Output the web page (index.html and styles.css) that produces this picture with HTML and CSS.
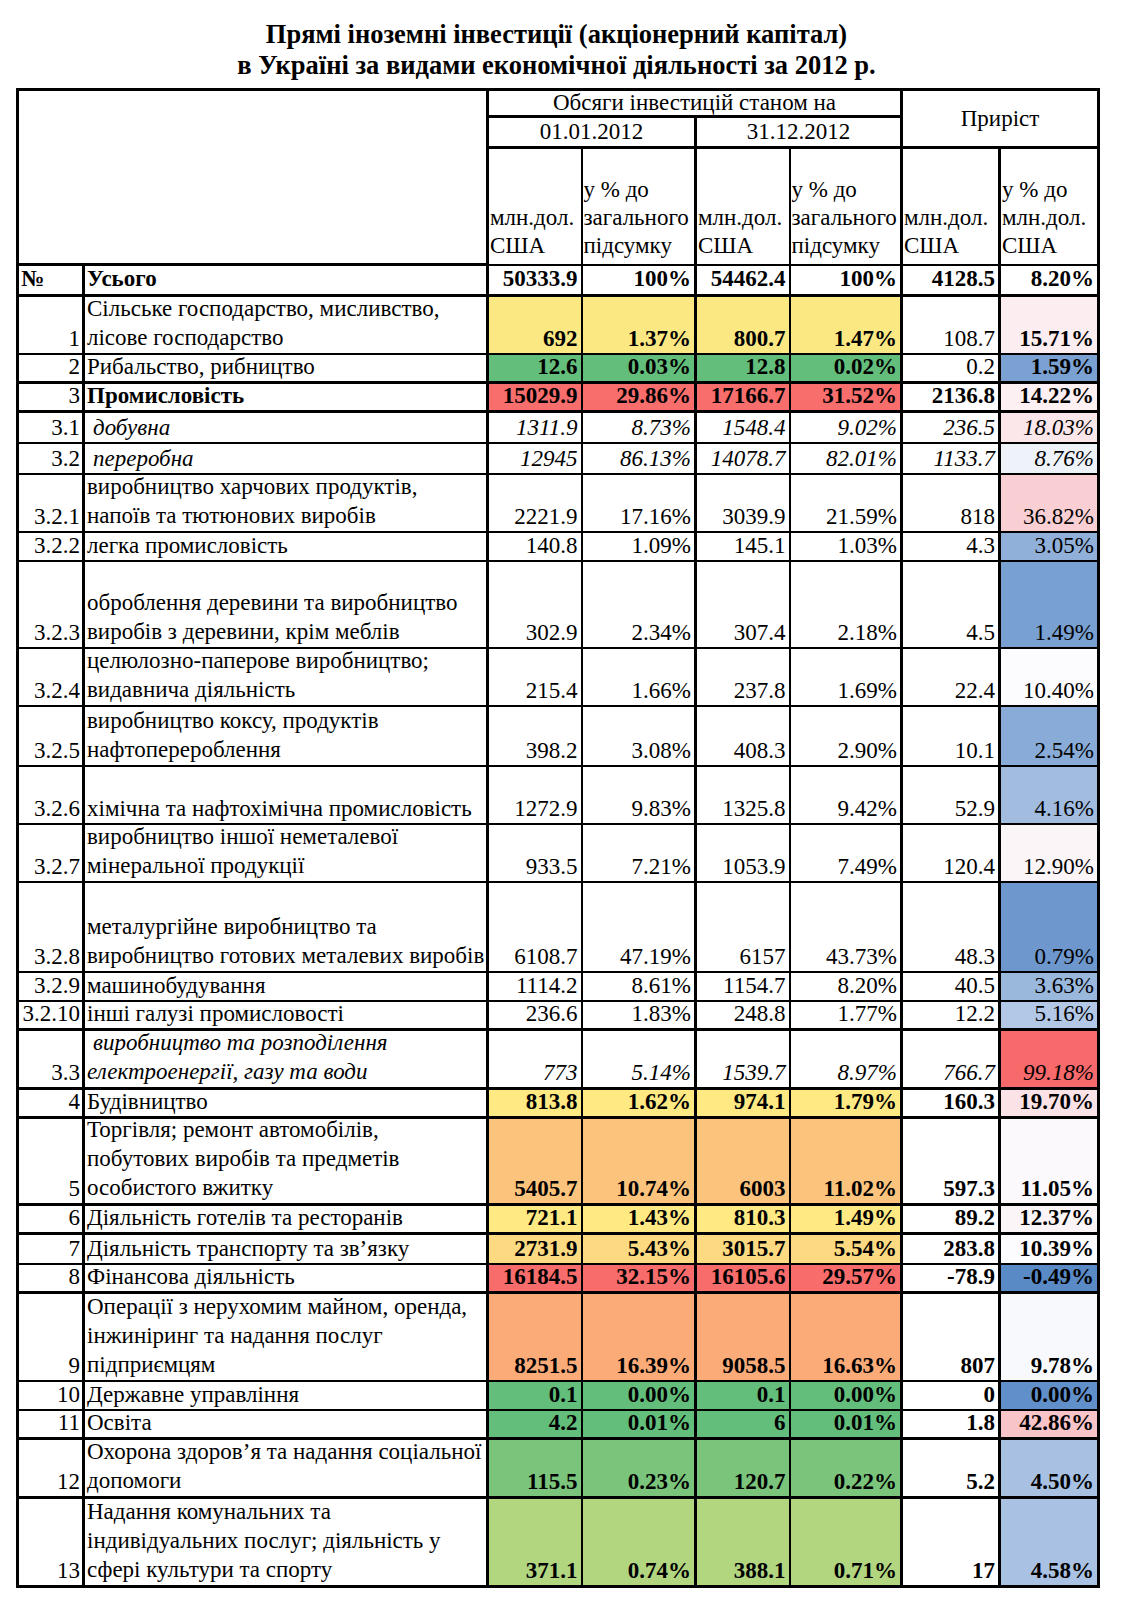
FILE: index.html
```html
<!DOCTYPE html>
<html lang="uk">
<head>
<meta charset="utf-8">
<title>Прямі іноземні інвестиції</title>
<link rel="stylesheet" href="styles.css">
</head>
<body>
<div class="page">
  <h1 class="title">Прямі іноземні інвестиції (акціонерний капітал)<br>в Україні за видами економічної діяльності за 2012 р.</h1>
  <table class="fdi">
    <colgroup>
      <col class="w-no"><col class="w-name"><col class="w-a"><col class="w-b"><col class="w-a"><col class="w-c"><col class="w-d"><col class="w-e">
    </colgroup>
    <thead>
      <tr class="hA">
        <th colspan="2" rowspan="3" class="blank"></th>
        <th colspan="4" class="ctr">Обсяги інвестицій станом на</th>
        <th colspan="2" rowspan="2" class="ctr">Приріст</th>
      </tr>
      <tr class="hB">
        <th colspan="2" class="ctr">01.01.2012</th>
        <th colspan="2" class="ctr">31.12.2012</th>
      </tr>
      <tr class="hC">
        <th class="sub">млн.дол.<br>США</th>
        <th class="sub">у % до<br>загального<br>підсумку</th>
        <th class="sub">млн.дол.<br>США</th>
        <th class="sub">у % до<br>загального<br>підсумку</th>
        <th class="sub">млн.дол.<br>США</th>
        <th class="sub">у % до<br>млн.дол.<br>США</th>
      </tr>
    </thead>
    <tbody>
      <tr class="h1b total tb">
        <td class="nol">№</td><td>Усього</td>
        <td>50333.9</td><td>100%</td><td>54462.4</td><td>100%</td><td>4128.5</td><td>8.20%</td>
      </tr>
      <tr class="h2 f1">
        <td>1</td><td><span class="ml">Сільське господарство, мисливство,<br>лісове господарство</span></td>
        <td>692</td><td>1.37%</td><td>800.7</td><td>1.47%</td><td class="reg">108.7</td><td class="s-p15">15.71%</td>
      </tr>
      <tr class="h1 f2 tb">
        <td>2</td><td>Рибальство, рибництво</td>
        <td>12.6</td><td>0.03%</td><td>12.8</td><td>0.02%</td><td class="reg">0.2</td><td class="s-b159">1.59%</td>
      </tr>
      <tr class="h1 f3 tb bold-all">
        <td>3</td><td>Промисловість</td>
        <td>15029.9</td><td>29.86%</td><td>17166.7</td><td>31.52%</td><td>2136.8</td><td class="s-p14">14.22%</td>
      </tr>
      <tr class="h1b it">
        <td>3.1</td><td class="ind">добувна</td>
        <td>1311.9</td><td>8.73%</td><td>1548.4</td><td>9.02%</td><td>236.5</td><td class="s-p18">18.03%</td>
      </tr>
      <tr class="h1b it">
        <td>3.2</td><td class="ind">переробна</td>
        <td>12945</td><td>86.13%</td><td>14078.7</td><td>82.01%</td><td>1133.7</td><td class="s-b876">8.76%</td>
      </tr>
      <tr class="h2 plain">
        <td>3.2.1</td><td><span class="ml">виробництво харчових продуктів,<br>напоїв та тютюнових виробів</span></td>
        <td>2221.9</td><td>17.16%</td><td>3039.9</td><td>21.59%</td><td>818</td><td class="s-p36">36.82%</td>
      </tr>
      <tr class="h1 plain">
        <td>3.2.2</td><td>легка промисловість</td>
        <td>140.8</td><td>1.09%</td><td>145.1</td><td>1.03%</td><td>4.3</td><td class="s-b305">3.05%</td>
      </tr>
      <tr class="h3 plain">
        <td>3.2.3</td><td><span class="ml">оброблення деревини та виробництво<br>виробів з деревини, крім меблів</span></td>
        <td>302.9</td><td>2.34%</td><td>307.4</td><td>2.18%</td><td>4.5</td><td class="s-b149">1.49%</td>
      </tr>
      <tr class="h2 plain">
        <td>3.2.4</td><td><span class="ml">целюлозно-паперове виробництво;<br>видавнича діяльність</span></td>
        <td>215.4</td><td>1.66%</td><td>237.8</td><td>1.69%</td><td>22.4</td><td class="s-w">10.40%</td>
      </tr>
      <tr class="h2b plain">
        <td>3.2.5</td><td><span class="ml">виробництво коксу, продуктів<br>нафтоперероблення</span></td>
        <td>398.2</td><td>3.08%</td><td>408.3</td><td>2.90%</td><td>10.1</td><td class="s-b254">2.54%</td>
      </tr>
      <tr class="h2 plain">
        <td>3.2.6</td><td>хімічна та нафтохімічна промисловість</td>
        <td>1272.9</td><td>9.83%</td><td>1325.8</td><td>9.42%</td><td>52.9</td><td class="s-b416">4.16%</td>
      </tr>
      <tr class="h2 plain">
        <td>3.2.7</td><td><span class="ml">виробництво іншої неметалевої<br>мінеральної продукції</span></td>
        <td>933.5</td><td>7.21%</td><td>1053.9</td><td>7.49%</td><td>120.4</td><td class="s-p12">12.90%</td>
      </tr>
      <tr class="h3b plain">
        <td>3.2.8</td><td><span class="ml">металургійне виробництво та<br>виробництво готових металевих виробів</span></td>
        <td>6108.7</td><td>47.19%</td><td>6157</td><td>43.73%</td><td>48.3</td><td class="s-b079">0.79%</td>
      </tr>
      <tr class="h1 plain">
        <td>3.2.9</td><td>машинобудування</td>
        <td>1114.2</td><td>8.61%</td><td>1154.7</td><td>8.20%</td><td>40.5</td><td class="s-b363">3.63%</td>
      </tr>
      <tr class="h1 plain tb">
        <td>3.2.10</td><td>інші галузі промисловості</td>
        <td>236.6</td><td>1.83%</td><td>248.8</td><td>1.77%</td><td>12.2</td><td class="s-b516">5.16%</td>
      </tr>
      <tr class="h2c it tb">
        <td>3.3</td><td><span class="ml"><span class="ind-in">виробництво та розподілення</span><br>електроенергії, газу та води</span></td>
        <td>773</td><td>5.14%</td><td>1539.7</td><td>8.97%</td><td>766.7</td><td class="s-r">99.18%</td>
      </tr>
      <tr class="h1 f4 tb">
        <td>4</td><td>Будівництво</td>
        <td>813.8</td><td>1.62%</td><td>974.1</td><td>1.79%</td><td>160.3</td><td class="s-p19">19.70%</td>
      </tr>
      <tr class="h3 f5 tb">
        <td>5</td><td><span class="ml">Торгівля; ремонт автомобілів,<br>побутових виробів та предметів<br>особистого вжитку</span></td>
        <td>5405.7</td><td>10.74%</td><td>6003</td><td>11.02%</td><td>597.3</td><td class="s-p11">11.05%</td>
      </tr>
      <tr class="h1 f6 tb">
        <td>6</td><td>Діяльність готелів та ресторанів</td>
        <td>721.1</td><td>1.43%</td><td>810.3</td><td>1.49%</td><td>89.2</td><td class="s-p123">12.37%</td>
      </tr>
      <tr class="h1b f7">
        <td>7</td><td>Діяльність транспорту та зв’язку</td>
        <td>2731.9</td><td>5.43%</td><td>3015.7</td><td>5.54%</td><td>283.8</td><td class="s-w">10.39%</td>
      </tr>
      <tr class="h1 f8 tb">
        <td>8</td><td>Фінансова діяльність</td>
        <td>16184.5</td><td>32.15%</td><td>16105.6</td><td>29.57%</td><td>-78.9</td><td class="s-bmin">-0.49%</td>
      </tr>
      <tr class="h3c f9">
        <td>9</td><td><span class="ml">Операції з нерухомим майном, оренда,<br>інжиніринг та надання послуг<br>підприємцям</span></td>
        <td>8251.5</td><td>16.39%</td><td>9058.5</td><td>16.63%</td><td>807</td><td class="s-w2">9.78%</td>
      </tr>
      <tr class="h1 f10">
        <td>10</td><td>Державне управління</td>
        <td>0.1</td><td>0.00%</td><td>0.1</td><td>0.00%</td><td>0</td><td class="s-b000">0.00%</td>
      </tr>
      <tr class="h1 f10 tb">
        <td>11</td><td>Освіта</td>
        <td>4.2</td><td>0.01%</td><td>6</td><td>0.01%</td><td>1.8</td><td class="s-p42">42.86%</td>
      </tr>
      <tr class="h2c f12 tb">
        <td>12</td><td><span class="ml">Охорона здоров’я та надання соціальної<br>допомоги</span></td>
        <td>115.5</td><td>0.23%</td><td>120.7</td><td>0.22%</td><td>5.2</td><td class="s-b450">4.50%</td>
      </tr>
      <tr class="h3d f13">
        <td>13</td><td><span class="ml">Надання комунальних та<br>індивідуальних послуг; діяльність у<br>сфері культури та спорту</span></td>
        <td>371.1</td><td>0.74%</td><td>388.1</td><td>0.71%</td><td>17</td><td class="s-b458">4.58%</td>
      </tr>
    </tbody>
  </table>
</div>
</body>
</html>
```
FILE: styles.css
```css
html, body {
  margin: 0;
  padding: 0;
  background: #fff;
}

.page {
  padding: 19px 0 0 16px;
  width: 1081px;
  font-family: "Liberation Serif", "Times New Roman", serif;
  color: #000;
}

.title {
  margin: 0 0 7px 0;
  font-size: 26.5px;
  line-height: 31px;
  font-weight: bold;
  text-align: center;
}

.fdi {
  border-collapse: collapse;
  table-layout: fixed;
  width: 1081px;
  border: 3px solid #000;
  font-size: 23px;
  line-height: 23px;
}

.w-no { width: 66px; }
.w-name { width: 404px; }
.w-a { width: 94px; }
.w-b { width: 114px; }
.w-c { width: 112px; }
.w-d { width: 98px; }
.w-e { width: 99px; }

.fdi th,
.fdi td {
  border: 2px solid #000;
  padding: 0 3px 3px 2px;
  vertical-align: bottom;
  white-space: nowrap;
  overflow: hidden;
}

.fdi th {
  font-weight: normal;
}

.fdi th.ctr {
  text-align: center;
  vertical-align: middle;
  border-width: 3px;
  line-height: 22px;
  padding: 0;
}

.fdi th.blank {
  border-width: 3px;
}

.fdi th.sub {
  text-align: left;
  line-height: 28px;
  padding: 0 0 4px 1px;
}

.fdi th.sub:nth-child(2),
.fdi th.sub:nth-child(4),
.fdi th.sub:nth-child(5) {
  border-right-width: 3px;
}

.hA { height: 27px; }
.hB { height: 31px; }
.hC { height: 117px; }

.fdi td {
  text-align: right;
}

.fdi td:nth-child(1) {
  padding-left: 0;
  padding-right: 2px;
}

.fdi td:nth-child(2) {
  text-align: left;
}

.fdi td:nth-child(1),
.fdi td:nth-child(2),
.fdi td:nth-child(4),
.fdi td:nth-child(6),
.fdi td:nth-child(7) {
  border-right-width: 3px;
}

.fdi tr.tb td {
  border-bottom-width: 3px;
}

/* multi-line labels: lines are 29px apart, the block sits into the cell edge */
.ml {
  display: block;
  line-height: 29px;
  margin-top: -6px;
  margin-bottom: -2px;
}

.h1 { height: 29px; }
.h1b { height: 30px; }
.h2 { height: 58px; }
.h2b { height: 60px; }
.h2c { height: 59px; }
.h3 { height: 87px; }
.h3b { height: 90px; }
.h3c { height: 88px; }
.h3d { height: 89px; }

.it.h1b { height: 31px; }
.total.h1b { height: 31px; }

/* totals row */
.total td {
  font-weight: bold;
  vertical-align: middle;
}
.fdi .total td.nol {
  text-align: left;
  padding-left: 2px;
}

/* bold numbers */
.f1 td:nth-child(n+3),
.f2 td:nth-child(n+3),
.f3 td,
.f4 td:nth-child(n+3),
.f5 td:nth-child(n+3),
.f6 td:nth-child(n+3),
.f7 td:nth-child(n+3),
.f8 td:nth-child(n+3),
.f9 td:nth-child(n+3),
.f10 td:nth-child(n+3),
.f12 td:nth-child(n+3),
.f13 td:nth-child(n+3) {
  font-weight: bold;
}
.f3 td:first-child { font-weight: normal; }
.fdi td.reg { font-weight: normal; }

.it td:nth-child(n+2) {
  font-style: italic;
}
.fdi td.ind { padding-left: 8px; }
.ind-in { padding-left: 6px; }

/* row fills for the four volume columns */
.f1 td:nth-child(n+3):nth-child(-n+6) { background: #fbe883; }
.f2 td:nth-child(n+3):nth-child(-n+6) { background: #64be7b; }
.f3 td:nth-child(n+3):nth-child(-n+6) { background: #f86e6c; }
.f4 td:nth-child(n+3):nth-child(-n+6) { background: #fee983; }
.f5 td:nth-child(n+3):nth-child(-n+6) { background: #fcc37d; }
.f6 td:nth-child(n+3):nth-child(-n+6) { background: #fee983; }
.f7 td:nth-child(n+3):nth-child(-n+6) { background: #fdda81; }
.f8 td:nth-child(n+3):nth-child(-n+6) { background: #f86c6b; }
.f9 td:nth-child(n+3):nth-child(-n+6) { background: #fbab78; }
.f10 td:nth-child(n+3):nth-child(-n+6) { background: #63be7b; }
.f12 td:nth-child(n+3):nth-child(-n+6) { background: #7ac47c; }
.f13 td:nth-child(n+3):nth-child(-n+6) { background: #b2d580; }

/* colour scale of the growth column */
.fdi td.s-bmin { background: #5a8ac6; }
.fdi td.s-b000 { background: #618fc9; }
.fdi td.s-b079 { background: #6d97cd; }
.fdi td.s-b149 { background: #78a0d1; }
.fdi td.s-b159 { background: #7aa1d1; }
.fdi td.s-b254 { background: #89abd7; }
.fdi td.s-b305 { background: #90b0d9; }
.fdi td.s-b363 { background: #9ab7dc; }
.fdi td.s-b416 { background: #a2bcdf; }
.fdi td.s-b450 { background: #a8c0e2; }
.fdi td.s-b458 { background: #a9c1e2; }
.fdi td.s-b516 { background: #b3c8e6; }
.fdi td.s-b876 { background: #eef2f9; }
.fdi td.s-w2 { background: #f8f9fd; }
.fdi td.s-w { background: #fcfbfe; }
.fdi td.s-p11 { background: #fcf9fc; }
.fdi td.s-p123 { background: #fcf5f8; }
.fdi td.s-p12 { background: #fcf5f8; }
.fdi td.s-p14 { background: #fcf0f3; }
.fdi td.s-p15 { background: #fcedf0; }
.fdi td.s-p18 { background: #fbe6ea; }
.fdi td.s-p19 { background: #fbe2e6; }
.fdi td.s-p36 { background: #facfd3; }
.fdi td.s-p42 { background: #f9c4c8; }
.fdi td.s-r { background: #f8696b; }
```
